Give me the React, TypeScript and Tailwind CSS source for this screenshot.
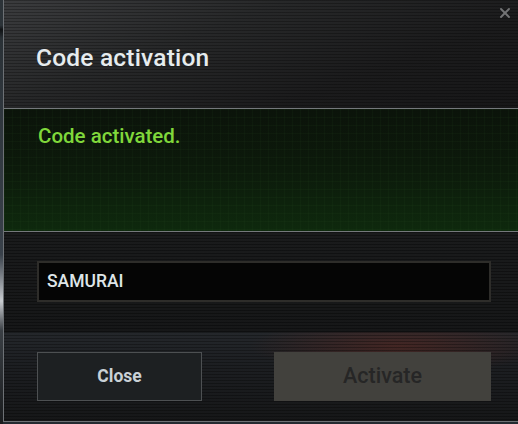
import { X } from "lucide-react";

const font = { fontFamily: '"Roboto", "Liberation Sans", sans-serif' };

const App = () => {
  return (
    <div
      className="w-[518px] h-[424px] flex bg-[#232a30] overflow-hidden"
      style={font}
    >
      {/* Backdrop strip on the left */}
      <div className="w-[3px] h-full bg-[linear-gradient(180deg,#2c3338_0%,#2c3338_6%,#101214_7%,#2a3136_9%,#39414a_60%,#c9ccd0_71%,#3a3f44_78%,#1a1c1e_100%)]" />

      {/* Dialog */}
      <div className="flex-1 h-[422px] flex flex-col border-l border-b border-[#6d7175] bg-[#151617]">
        {/* Header */}
        <div className="relative h-[108px] shrink-0 bg-[repeating-linear-gradient(180deg,rgba(0,0,0,0.28)_0px,rgba(0,0,0,0.28)_1px,transparent_1px,transparent_3px),linear-gradient(160deg,#3b3c3e_0%,#272829_35%,#1b1b1c_70%,#171718_100%)]">
          <h1 className="pl-[32px] pt-[46px] text-[24.5px] leading-none font-medium text-[#e6ecee] tracking-[0.2px]">
            Code activation
          </h1>
          <X
            className="absolute top-[5px] right-[5px] w-[16px] h-[16px] text-[#737475]"
            strokeWidth={2.8}
          />
        </div>

        {/* Status area */}
        <div className="h-[124px] shrink-0 border-y border-[#74787b] bg-[linear-gradient(90deg,rgba(60,110,50,0.07)_1px,transparent_1px),linear-gradient(180deg,rgba(60,110,50,0.07)_1px,transparent_1px),linear-gradient(180deg,#0b130a_0%,#0c1a0b_50%,#0e290d_100%)] bg-[length:8px_8px,8px_8px,100%_100%]">
          <p className="pl-[34px] pt-[17px] text-[20.5px] leading-none font-medium text-[#80d83b]">
            Code activated.
          </p>
        </div>

        {/* Input area */}
        <div className="h-[100px] shrink-0 pt-[29px] px-[33px] pr-[27px] bg-[repeating-linear-gradient(180deg,rgba(0,0,0,0.35)_0px,rgba(0,0,0,0.35)_1px,transparent_1px,transparent_3px),linear-gradient(180deg,#1a1b1c_0%,#161718_100%)]">
          <div className="h-[41px] flex items-center px-[8px] bg-[#050505] border-2 border-[#2e2d2a]">
            <span className="text-[17.5px] font-medium text-[#dfe5e8]">SAMURAI</span>
          </div>
        </div>

        {/* Footer */}
        <div className="flex-1 flex items-start gap-[72px] pt-[20px] pl-[33px] pr-[27px] bg-[repeating-linear-gradient(180deg,rgba(0,0,0,0.3)_0px,rgba(0,0,0,0.3)_1px,transparent_1px,transparent_3px),radial-gradient(ellipse_150px_28px_at_395px_14px,rgba(120,42,30,0.4),transparent),linear-gradient(180deg,#24272b_0%,#1c1e21_40%,#161718_100%)]">
          <button className="w-[165px] h-[49px] bg-[#1d2022] border border-[#4d5052] text-[17.5px] font-bold text-[#c9d1d6]">
            Close
          </button>
          <button className="w-[217px] h-[49px] bg-[#42413d] text-[21.5px] font-medium text-[#262626]">
            Activate
          </button>
        </div>
      </div>
    </div>
  );
};

export default App;
